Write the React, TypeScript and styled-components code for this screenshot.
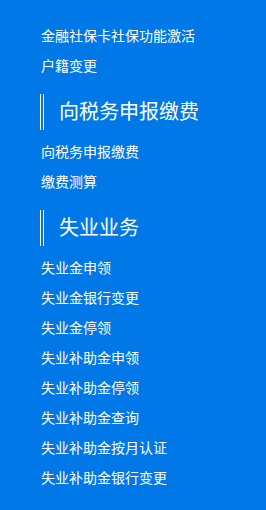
import styled, { createGlobalStyle } from 'styled-components';

const GlobalStyle = createGlobalStyle`
  html, body {
    margin: 0;
    padding: 0;
    background: #0078e7;
  }
  body {
    font-family: "Noto Sans CJK SC", "Noto Sans", sans-serif;
  }
`;

const Page = styled.div`
  width: 266px;
  min-height: 510px;
  background: #0078e7;
  color: #ffffff;
  box-sizing: border-box;
  padding: 20px 0 0 41px;
`;

const Item = styled.a`
  display: block;
  font-size: 14px;
  line-height: 30px;
  height: 30px;
  color: #ffffff;
  text-decoration: none;
  white-space: nowrap;
  cursor: pointer;
`;

const SectionTitle = styled.h3`
  margin: 14px 0 6px -1px;
  height: 36px;
  box-sizing: border-box;
  display: flex;
  align-items: center;
  border-left: 4px double #ffffff;
  padding: 0 0 4px 15px;
  font-size: 20px;
  font-weight: 400;
  color: #ffffff;
`;

const sections: { title?: string; items: string[] }[] = [
  { items: ['金融社保卡社保功能激活', '户籍变更'] },
  { title: '向税务申报缴费', items: ['向税务申报缴费', '缴费测算'] },
  {
    title: '失业业务',
    items: [
      '失业金申领',
      '失业金银行变更',
      '失业金停领',
      '失业补助金申领',
      '失业补助金停领',
      '失业补助金查询',
      '失业补助金按月认证',
      '失业补助金银行变更',
    ],
  },
];

export default function App() {
  return (
    <>
      <GlobalStyle />
      <Page>
        {sections.map((s, i) => (
          <div key={i}>
            {s.title && <SectionTitle>{s.title}</SectionTitle>}
            {s.items.map((it) => (
              <Item key={it}>{it}</Item>
            ))}
          </div>
        ))}
      </Page>
    </>
  );
}
